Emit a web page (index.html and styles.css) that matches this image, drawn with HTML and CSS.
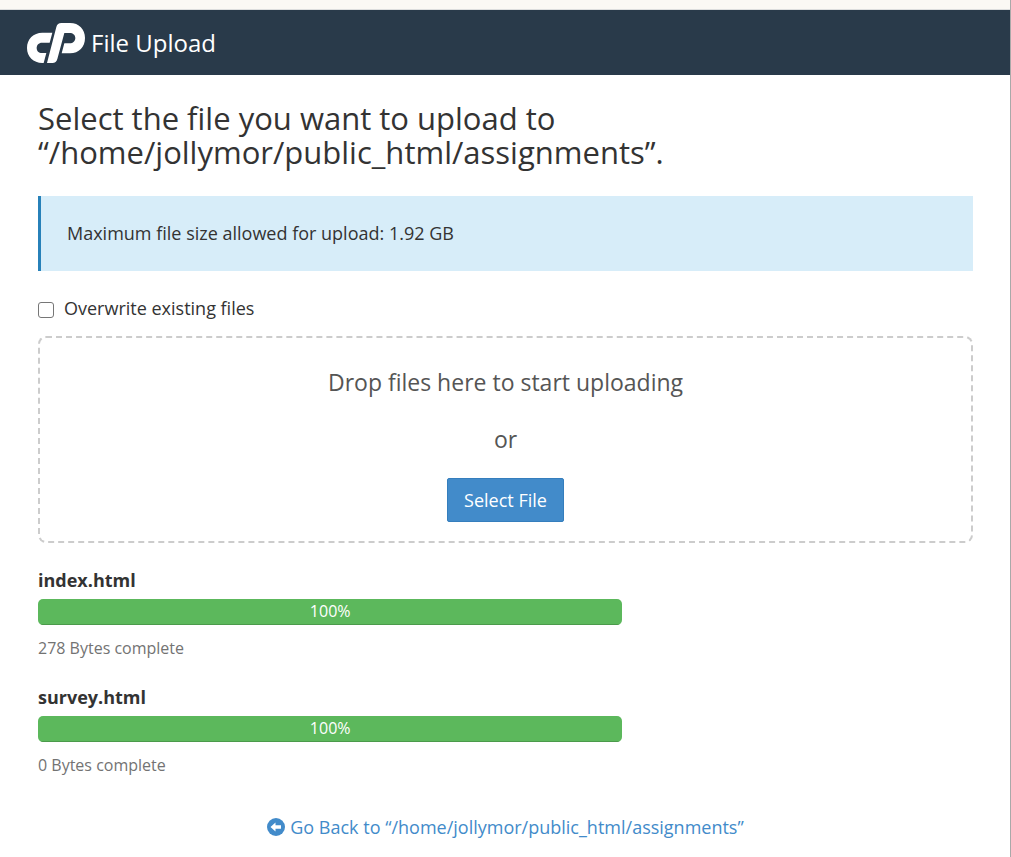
FILE: index.html
```html
<!DOCTYPE html>
<html lang="en">
<head>
    <meta charset="UTF-8">
    <meta name="viewport" content="width=device-width, initial-scale=1.0">
    <title>File Upload</title>
    <link rel="stylesheet" href="styles.css">
</head>
<body>
    <header class="navbar">
        <svg class="logo" viewBox="0 0 174 120" fill="#ffffff" aria-hidden="true">
            <path d="M76 29 L68 59 H45 C35 59 29 66 29 75 C29 84 35 90 45 90 H58 L50 120 H46 C19 120 0 101 0 75 C0 48 19 29 46 29 Z"/>
            <path d="M60 120 L88 12 C90 4 95 0 103 0 H129 C156 0 174 19 174 45 C174 72 156 91 129 91 H104 L112 61 H128 C138 61 145 54 145 45 C145 36 138 30 128 30 H112 L91 108 C89 116 84 120 76 120 Z"/>
        </svg>
        <span class="page-title">File Upload</span>
    </header>
    <main class="content">
        <h1>Select the file you want to upload to “/home/jollymor/public_html/assignments”.</h1>
        <div class="callout">Maximum file size allowed for upload: 1.92 GB</div>
        <div class="overwrite">
            <input type="checkbox" id="overwrite">
            <label for="overwrite">Overwrite existing files</label>
        </div>
        <div class="drop-area">
            <p>Drop files here to start uploading</p>
            <p>or</p>
            <button type="button" class="btn">Select File</button>
        </div>
        <div class="upload">
            <div class="file-name">index.html</div>
            <div class="progress"><div class="progress-bar" style="width: 100%;">100%</div></div>
            <div class="file-status">278 Bytes complete</div>
        </div>
        <div class="upload">
            <div class="file-name">survey.html</div>
            <div class="progress"><div class="progress-bar" style="width: 100%;">100%</div></div>
            <div class="file-status">0 Bytes complete</div>
        </div>
        <div class="go-back">
            <a href="#">
                <svg class="icon" viewBox="0 0 18 18" aria-hidden="true">
                    <circle cx="9" cy="9" r="9" fill="currentColor"/>
                    <path d="M3.5 9 L8.5 4.5 V7.3 H14 V10.7 H8.5 V13.5 Z" fill="#ffffff"/>
                </svg>
                Go Back to “/home/jollymor/public_html/assignments”
            </a>
        </div>
    </main>
</body>
</html>
```

FILE: styles.css
```css
* {
    box-sizing: border-box;
}
body {
    margin: 0;
    min-height: 100vh;
    border-right: 1px solid #a9a9a9;
    background-color: #ffffff;
    color: #333333;
    font-family: "Open Sans", sans-serif;
    font-size: 18px;
    line-height: 26px;
}
.navbar {
    display: flex;
    align-items: center;
    gap: 6px;
    padding: 14px 27px 12px;
    border-top: 9px solid #fbf8f4;
    background-color: #293a4a;
    box-shadow: inset 0 1px 0 #dddddd;
    color: #ffffff;
}
.logo {
    width: 58px;
    height: 40px;
}
.page-title {
    font-size: 24px;
    line-height: 34px;
}
.content {
    padding: 26px 37px 0 38px;
}
h1 {
    margin: 0 0 27px;
    font-size: 31px;
    font-weight: 400;
    line-height: 34px;
}
.callout {
    padding: 24px 26px 25px;
    border-left: 3px solid #2781b9;
    background-color: #d7edf9;
}
.overwrite {
    display: flex;
    align-items: center;
    gap: 10px;
    margin: 24px 0 15px;
}
.overwrite input {
    appearance: none;
    width: 16px;
    height: 16px;
    margin: 3px 0 0;
    border: 1px solid #767676;
    border-radius: 3px;
    background-color: #ffffff;
}
.overwrite input:checked {
    background-color: #428bca;
}
.drop-area {
    margin-bottom: 24px;
    padding: 27px 20px 19px;
    border: 2px dashed #cccccc;
    border-radius: 8px;
    color: #555555;
    font-size: 23px;
    line-height: 34px;
    text-align: center;
}
.drop-area p {
    margin: 0 0 23px;
}
.drop-area p + p {
    margin-bottom: 22px;
}
.btn {
    display: block;
    margin: 0 auto;
    padding: 8px 16px;
    border: 1px solid #357ebd;
    border-radius: 2px;
    background-color: #428bca;
    color: #ffffff;
    font-family: inherit;
    font-size: 18px;
    line-height: 26px;
    cursor: pointer;
}
.upload {
    width: 62.5%;
    margin-top: 23px;
}
.file-name {
    font-weight: 700;
}
.progress {
    margin: 6px 0 10px;
    border-radius: 5px;
    background-color: #f5f5f5;
    overflow: hidden;
}
.progress-bar {
    height: 26px;
    background-color: #5cb85c;
    box-shadow: inset 0 -1px 0 #4b9a4b;
    color: #ffffff;
    font-size: 16px;
    line-height: 25px;
    text-align: center;
}
.file-status {
    color: #737373;
    font-size: 16px;
}
.go-back {
    margin-top: 36px;
    text-align: center;
}
.go-back a {
    display: inline-flex;
    align-items: center;
    gap: 5px;
    color: #428bca;
    text-decoration: none;
}
.icon {
    width: 18px;
    height: 18px;
}
```
